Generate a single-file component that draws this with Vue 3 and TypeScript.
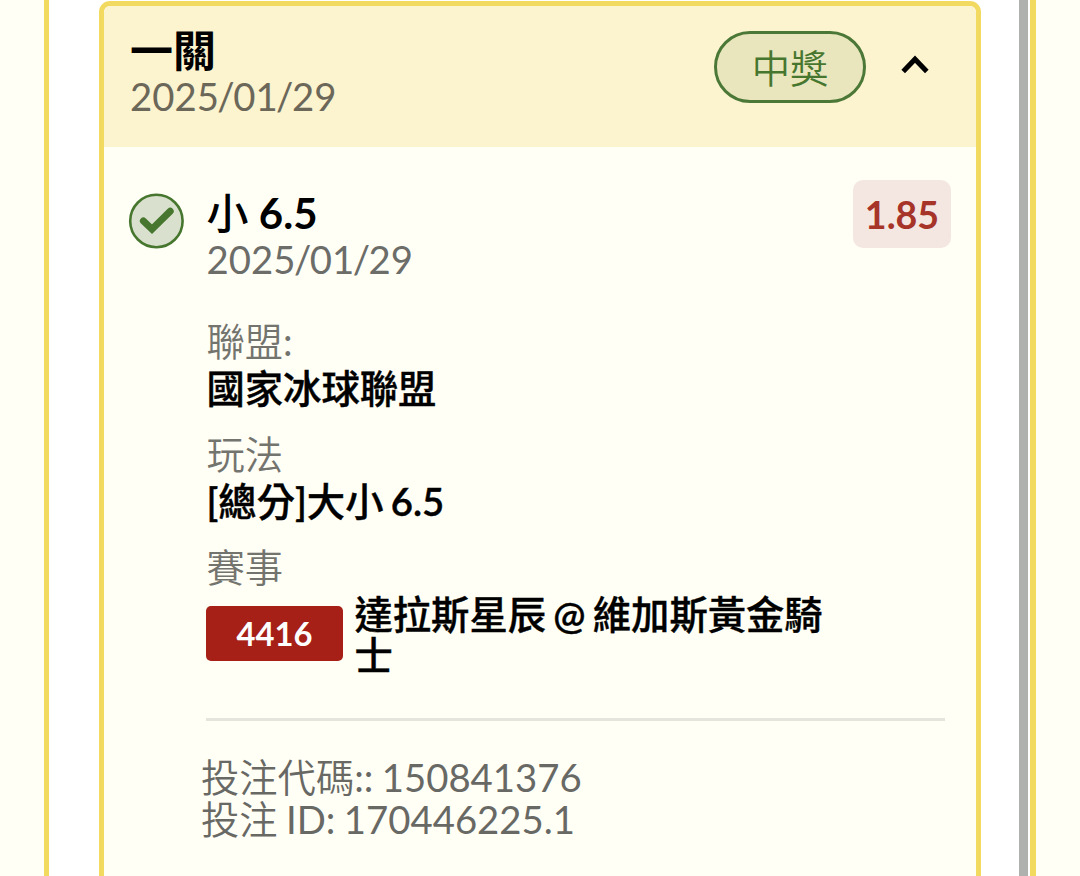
<script setup lang="ts">
interface Detail {
  label: string
  value: string
}

const ticket = {
  title: '一關',
  date: ['2025', '01', '29'],
  status: '中獎',
}

const selection = {
  name: '小 6.5',
  date: ['2025', '01', '29'],
  odds: '1.85',
}

const details: Detail[] = [
  { label: '聯盟:', value: '國家冰球聯盟' },
  { label: '玩法', value: '[總分]大小 6.5' },
]

const match = { label: '賽事', code: '4416', teams: '達拉斯星辰 @ 維加斯黃金騎士' }

const references: string[] = ['投注代碼:: 150841376', '投注 ID: 170446225.1']
</script>

<template>
  <div class="page">
    <div class="panel">
      <article class="card">
        <header class="card-header">
          <div class="heading">
            <h2 class="title">{{ ticket.title }}</h2>
            <p class="date header-date">
              <template v-for="(part, i) in ticket.date" :key="i"><span v-if="i" class="slash">/</span>{{ part }}</template>
            </p>
          </div>
          <span class="status">{{ ticket.status }}</span>
          <svg class="chevron" viewBox="0 0 28 20" aria-hidden="true">
            <path d="M2.2 16.4 14 4.2 25.8 16.4" />
          </svg>
        </header>

        <div class="card-body">
          <svg class="check" viewBox="0 0 56 56" aria-hidden="true">
            <circle cx="28.4" cy="28" r="26.2" />
            <path d="M15.4 27.9 24 36.2 42.2 18.2" />
          </svg>

          <div class="content">
            <div class="selection">
              <div>
                <h3 class="name">{{ selection.name }}</h3>
                <p class="date">
                  <template v-for="(part, i) in selection.date" :key="i"><span v-if="i" class="slash">/</span>{{ part }}</template>
                </p>
              </div>
              <span class="odds">{{ selection.odds }}</span>
            </div>

            <dl class="details">
              <div v-for="item in details" :key="item.label" class="detail">
                <dt>{{ item.label }}</dt>
                <dd>{{ item.value }}</dd>
              </div>
              <div class="detail">
                <dt>{{ match.label }}</dt>
                <dd class="match">
                  <span class="match-code">{{ match.code }}</span>
                  <span class="teams">{{ match.teams }}</span>
                </dd>
              </div>
            </dl>

            <footer class="references">
              <p v-for="line in references" :key="line">{{ line }}</p>
            </footer>
          </div>
        </div>
      </article>
      <div class="scrollbar"></div>
    </div>
  </div>
</template>

<style>
body {
  background: #fffff6;
  overflow: hidden;
}
</style>

<style scoped>
.page {
  box-sizing: border-box;
  width: 1080px;
  height: 876px;
  padding: 0 44px;
  overflow: hidden;
  background: #fffff6;
  color: #000;
  font-family: Lato, "Noto Sans CJK TC DemiLight", "Noto Sans CJK TC", sans-serif;
  font-size: 38.3px;
  line-height: 42px;
}

h2, h3, p, dl, dd {
  margin: 0;
}

.panel {
  box-sizing: border-box;
  display: flex;
  width: 992px;
  height: 876px;
  padding-left: 50px;
  border: solid #f1da5f;
  border-width: 0 6px 0 5.5px;
  background: #fff;
}

.card {
  box-sizing: border-box;
  flex: none;
  width: 882px;
  height: 920px;
  margin-top: 1px;
  border: 5.5px solid #f1da5f;
  border-radius: 11px;
  background: #fffff6;
  overflow: hidden;
}

.scrollbar {
  width: 9px;
  margin-left: 38px;
  background: #afb1af;
}

.card-header {
  box-sizing: border-box;
  display: flex;
  align-items: flex-start;
  height: 141px;
  padding: 22px 47px 0 26px;
  background: #fcf3cf;
}

.heading {
  flex: 1;
}

.title {
  margin-bottom: 2px;
  font-family: Lato, "Noto Sans CJK TC", sans-serif;
  font-size: 43px;
  font-weight: 700;
  line-height: 45px;
}

.date {
  color: #6c6c69;
}

.header-date {
  color: #6b6759;
}

.slash {
  margin: 0 -1.5px;
}

.status {
  box-sizing: border-box;
  width: 152px;
  height: 72px;
  margin-top: 3px;
  border: 3px solid #4b7836;
  border-radius: 36px;
  background: #e9e6be;
  color: #47772f;
  line-height: 69px;
  text-align: center;
}

.chevron {
  width: 28px;
  height: 20px;
  margin: 26.5px 0 0 35px;
  fill: none;
  stroke: #000;
  stroke-width: 5;
}

.card-body {
  display: flex;
  padding: 32px 25px 0 24px;
}

.check {
  flex: none;
  width: 56px;
  height: 56px;
  margin-top: 14px;
}

.check circle {
  fill: #d9e0cd;
  stroke: #47772f;
  stroke-width: 2.6;
}

.check path {
  fill: none;
  stroke: #47772f;
  stroke-width: 7;
  stroke-linecap: round;
}

.content {
  flex: 1;
  margin-left: 22px;
}

.selection {
  display: flex;
  justify-content: space-between;
  align-items: flex-start;
  padding: 11px 0 0 0.6px;
}

.name {
  margin-bottom: 1px;
  font-family: Lato, "Noto Sans CJK TC Medium", "Noto Sans CJK TC", sans-serif;
  font-size: 42px;
  font-weight: 700;
  line-height: 47px;
}

.odds {
  width: 98px;
  height: 68px;
  margin-top: -10px;
  border-radius: 10px;
  background: #f4e7e1;
  color: #a63429;
  font-size: 37.6px;
  font-weight: 700;
  line-height: 70px;
  text-align: center;
}

.details {
  margin: 40px 6px 0 0;
  padding-bottom: 41px;
  border-bottom: 3px solid #e5e5de;
}

.detail + .detail {
  margin-top: 24px;
}

dt {
  padding-left: 0.5px;
  color: #74746f;
}

dd {
  margin-top: 5px;
  padding-left: 0.5px;
  font-family: Lato, "Noto Sans CJK TC Medium", "Noto Sans CJK TC", sans-serif;
  font-weight: 600;
  word-spacing: -2.2px;
  -webkit-text-stroke: 0.4px currentColor;
}

.match {
  display: flex;
  align-items: center;
  margin-top: 5.5px;
  padding-left: 0;
  line-height: 41.5px;
}

.match-code {
  flex: none;
  width: 137px;
  height: 55px;
  margin-top: -4px;
  border-radius: 5px;
  background: #a62017;
  color: #fff;
  font-size: 32.8px;
  font-weight: 700;
  line-height: 55px;
  text-align: center;
  -webkit-text-stroke: 0;
}

.teams {
  width: 480px;
  margin-left: 11.5px;
}

.references {
  margin: 35px 0 0 -5px;
  color: #686864;
  line-height: 42px;
  word-spacing: -1.4px;
}
</style>
